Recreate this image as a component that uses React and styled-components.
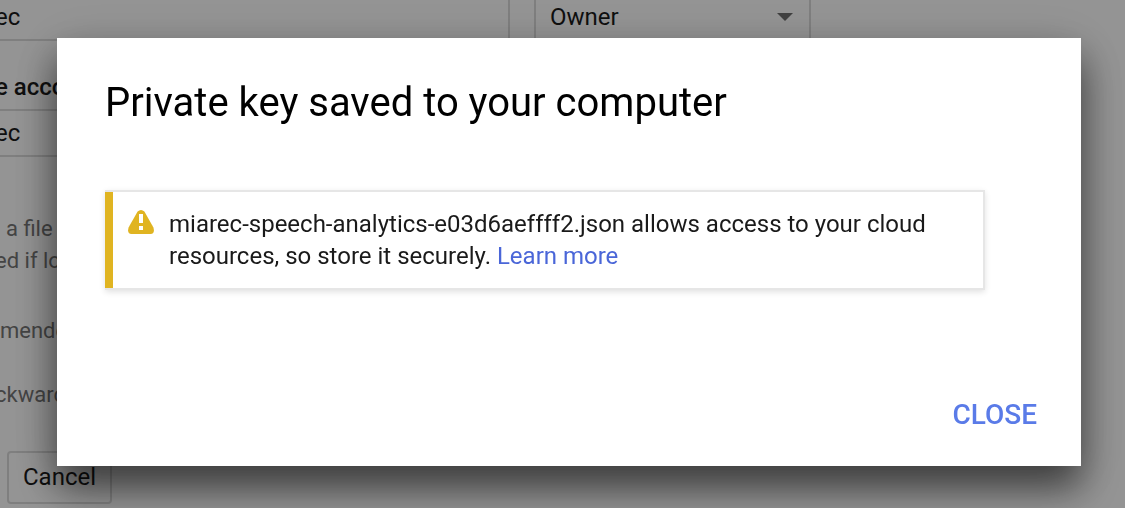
import styled, { createGlobalStyle } from "styled-components";

const GlobalStyle = createGlobalStyle`
  * {
    box-sizing: border-box;
  }

  body {
    margin: 0;
    background: #fff;
    color: #1a1a1a;
    font-family: Roboto, "Liberation Sans", sans-serif;
    font-size: 24px;
    line-height: 32px;
  }
`;

const Page = styled.main`
  height: 100vh;
  /* scrolled a little to the right, behind the dialog */
  margin-left: -5px;
  overflow: hidden;
`;

const FieldRow = styled.div`
  display: flex;
  gap: 24px;
  /* the top row is partly scrolled out of view */
  margin-top: ${(props) => (props.$scrolled ? "-7px" : "0")};
`;

const TextField = styled.input`
  width: 515px;
  height: 48px;
  padding: 0;
  border: 2px solid #dbdbdb;
  border-left: none;
  background: #fff;
  color: inherit;
  font: inherit;
`;

const SelectBox = styled.div`
  display: flex;
  align-items: center;
  width: 277px;
  height: 48px;
  padding-right: 16px;
  border: 2px solid #dbdbdb;
`;

const Select = styled.select`
  flex: 1;
  padding: 0 14px;
  border: none;
  appearance: none;
  background: none;
  color: inherit;
  font: inherit;
`;

const Caret = styled.span`
  border: 8px solid transparent;
  border-top-color: #6e6e6e;
  border-bottom: none;
`;

const Label = styled.label`
  display: block;
  margin-top: 30px;
  padding-bottom: 6px;
  font-weight: 500;
`;

const Hints = styled.div`
  margin-top: 56px;
  color: #757575;
  font-size: 22px;
`;

const Hint = styled.p`
  margin: 0 0 ${(props) => props.$gap || "0"};
  padding-left: ${(props) => props.$indent || "0"};
`;

const CancelButton = styled.button`
  height: 53px;
  margin: 40px 0 0 12px;
  padding: 0 14px 2px;
  border: 2px solid #dbdbdb;
  border-radius: 4px;
  background: #fff;
  color: inherit;
  font: inherit;
`;

const Backdrop = styled.div`
  position: fixed;
  inset: 0;
  display: flex;
  padding: 38px 44px 42px 57px;
  background: rgba(0, 0, 0, 0.42);
`;

const Dialog = styled.section`
  display: flex;
  flex: 1;
  flex-direction: column;
  padding: 41px 36px 27px 48px;
  background: #fff;
  box-shadow:
    0 22px 36px rgba(0, 0, 0, 0.55),
    0 8px 50px rgba(0, 0, 0, 0.15);
`;

const Title = styled.h1`
  margin: 0;
  color: #000;
  font-size: 40px;
  font-weight: 400;
  line-height: 48px;
`;

const Alert = styled.div`
  margin: 63px 60px 0 0;
  border: 2px solid #e6e6e6;
  border-left: none;
  box-shadow: 0 2px 6px rgba(0, 0, 0, 0.12);
`;

const AlertBody = styled.div`
  display: flex;
  gap: 14px;
  padding: 16px 24px 16px 14px;
  border-left: 8px solid #e0b421;
`;

const WarningIcon = styled.svg`
  flex: none;
  width: 28px;
  height: 28px;
`;

const AlertText = styled.p`
  margin: 0;
`;

const Link = styled.a`
  color: #4a66d8;
  text-decoration: none;
`;

const Actions = styled.footer`
  display: flex;
  justify-content: flex-end;
  margin-top: auto;
`;

const CloseButton = styled.button`
  padding: 8px;
  border: none;
  background: none;
  color: #5a7be8;
  font: inherit;
  font-size: 28px;
  font-weight: 500;
  line-height: 32px;
`;

const App = () => {
  return (
    <>
      <GlobalStyle />
      <Page>
        <FieldRow $scrolled>
          <TextField aria-label="Name" defaultValue="ec" />
          <SelectBox>
            <Select aria-label="Role" defaultValue="Owner">
              <option>Owner</option>
            </Select>
            <Caret />
          </SelectBox>
        </FieldRow>

        <Label htmlFor="account">e acco</Label>
        <FieldRow>
          <TextField id="account" defaultValue="ec" />
        </FieldRow>

        <Hints>
          <Hint $indent="11px">a file</Hint>
          <Hint $gap="38px">ed if lo</Hint>
          <Hint $gap="32px" $indent="5px">
            mende
          </Hint>
          <Hint>ckward</Hint>
        </Hints>

        <CancelButton type="button">Cancel</CancelButton>
      </Page>

      <Backdrop>
        <Dialog role="dialog" aria-modal="true" aria-labelledby="title">
          <Title id="title">Private key saved to your computer</Title>

          <Alert role="alert">
            <AlertBody>
              <WarningIcon viewBox="0 0 28 28" aria-hidden="true">
                <path
                  d="M10.6 3.6Q14 0.4 17.4 3.6L26.4 19.4Q28.2 25.8 23.6 26H4.4Q-0.2 25.8 1.6 19.4Z"
                  fill="#e0b421"
                />
                <path d="M12 6h4v9h-4zM12 18h4v4h-4z" fill="#fff" />
              </WarningIcon>
              <AlertText>
                miarec-speech-analytics-e03d6aeffff2.json allows access to your
                cloud resources, so store it securely.{" "}
                <Link href="#learn-more">Learn more</Link>
              </AlertText>
            </AlertBody>
          </Alert>

          <Actions>
            <CloseButton type="button">CLOSE</CloseButton>
          </Actions>
        </Dialog>
      </Backdrop>
    </>
  );
};

export default App;
